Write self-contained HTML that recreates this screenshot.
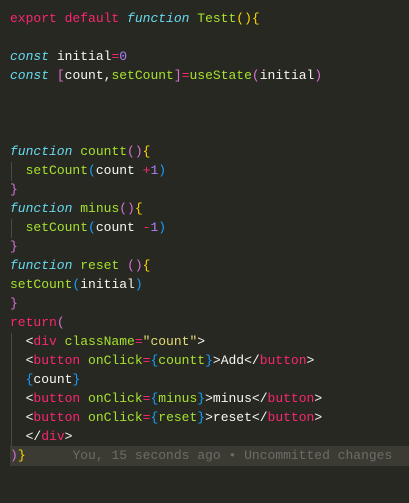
<html><head><style>
body{margin:0;background:#272822;width:409px;height:503px;overflow:hidden;position:relative}
pre{margin:0;position:absolute;top:9px;left:10px;font:13px/19px "Liberation Mono",monospace;color:#f8f8f2;white-space:pre}
.k{color:#f92672}.f{color:#66d9ef;font-style:italic}.g{color:#a6e22e}.p{color:#ae81ff}.s{color:#e6db74}
.y{color:#ffd700}.m{color:#da70d6}.b{color:#179fff}
.hl{position:absolute;left:10px;right:0;top:446px;height:20px;background:#3b3b34}
.gd{position:absolute;left:11px;width:1px;background:#4a4a44}
.bl{color:#6d6d66}
</style></head><body>
<div class="hl"></div>
<div class="gd" style="top:162px;height:19px"></div>
<div class="gd" style="top:219px;height:19px"></div>
<div class="gd" style="top:333px;height:114px"></div>
<pre><span class="k">export</span> <span class="k">default</span> <span class="f">function</span> <span class="g">Testt</span><span class="y">(){</span>

<span class="f">const</span> initial<span class="k">=</span><span class="p">0</span>
<span class="f">const</span> <span class="m">[</span>count,<span class="g">setCount</span><span class="m">]</span><span class="k">=</span><span class="g">useState</span><span class="m">(</span>initial<span class="m">)</span>



<span class="f">function</span> <span class="g">countt</span><span class="m">()</span><span class="y">{</span>
  <span class="g">setCount</span><span class="b">(</span>count <span class="k">+</span><span class="p">1</span><span class="b">)</span>
<span class="m">}</span>
<span class="f">function</span> <span class="g">minus</span><span class="m">()</span><span class="y">{</span>
  <span class="g">setCount</span><span class="b">(</span>count <span class="k">-</span><span class="p">1</span><span class="b">)</span>
<span class="m">}</span>
<span class="f">function</span> <span class="g">reset</span> <span class="m">()</span><span class="y">{</span>
<span class="g">setCount</span><span class="b">(</span>initial<span class="b">)</span>
<span class="m">}</span>
<span class="k">return</span><span class="m">(</span>
  &lt;<span class="k">div</span> <span class="g">className</span><span class="k">=</span><span class="s">"count"</span>&gt;
  &lt;<span class="k">button</span> <span class="g">onClick</span><span class="k">=</span><span class="b">{</span><span class="g">countt</span><span class="b">}</span>&gt;Add&lt;/<span class="k">button</span>&gt;
  <span class="b">{</span>count<span class="b">}</span>
  &lt;<span class="k">button</span> <span class="g">onClick</span><span class="k">=</span><span class="b">{</span><span class="g">minus</span><span class="b">}</span>&gt;minus&lt;/<span class="k">button</span>&gt;
  &lt;<span class="k">button</span> <span class="g">onClick</span><span class="k">=</span><span class="b">{</span><span class="g">reset</span><span class="b">}</span>&gt;reset&lt;/<span class="k">button</span>&gt;
  &lt;/<span class="k">div</span>&gt;
<span class="m">)</span><span class="y">}</span>      <span class="bl">You, 15 seconds ago • Uncommitted changes</span></pre>
</body></html>
